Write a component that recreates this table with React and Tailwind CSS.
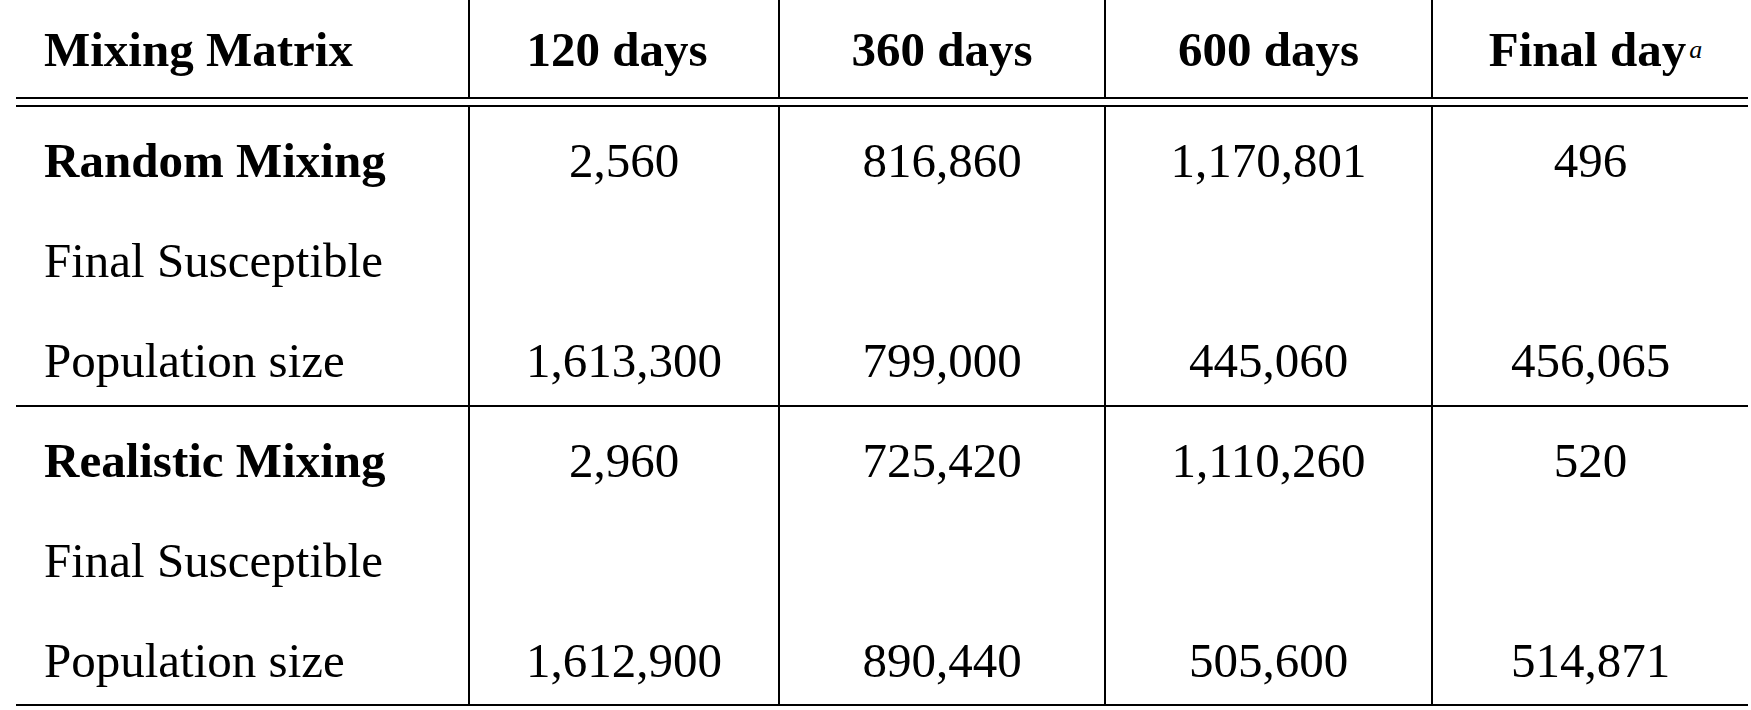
import React from "react";

const cols = "grid grid-cols-[454px_310px_326px_327px_1fr]";

const groups = [
  {
    name: "Random Mixing",
    first: ["2,560", "816,860", "1,170,801", "496"],
    last: ["1,613,300", "799,000", "445,060", "456,065"],
    pb: "pb-[16px]",
  },
  {
    name: "Realistic Mixing",
    first: ["2,960", "725,420", "1,110,260", "520"],
    last: ["1,612,900", "890,440", "505,600", "514,871"],
    pb: "pb-[15px]",
  },
];

function Group({ g }) {
  return (
    <div className={`${cols} border-b-2 border-black`}>
      <div className={`flex flex-col gap-[44px] pt-[26px] ${g.pb} pl-[28px] border-r-2 border-black`}>
        <div className="font-bold">{g.name}</div>
        <div>Final Susceptible</div>
        <div>Population size</div>
      </div>
      {g.first.map((v, i) => (
        <div
          key={i}
          className={`flex flex-col gap-[44px] pt-[26px] ${g.pb} text-center ${i < 3 ? "border-r-2 border-black" : ""}`}
        >
          <div>{v}</div>
          <div>&nbsp;</div>
          <div>{g.last[i]}</div>
        </div>
      ))}
    </div>
  );
}

export default function App() {
  return (
    <div className="bg-white w-full h-[710px] overflow-hidden pl-4 pr-[3px] text-black text-[49px] leading-[56px] font-[family-name:Liberation_Serif,Times_New_Roman,serif]">
      <div className={`${cols} h-[99px] border-b-2 border-black font-bold`}>
        <div className="flex items-center pt-[3px] pl-[28px] border-r-2 border-black">Mixing Matrix</div>
        <div className="flex items-center justify-center pt-[3px] pr-[14px] border-r-2 border-black">120 days</div>
        <div className="flex items-center justify-center pt-[3px] border-r-2 border-black">360 days</div>
        <div className="flex items-center justify-center pt-[3px] border-r-2 border-black">600 days</div>
        <div className="flex items-center justify-center pt-[3px] pl-[10px]">
          <span>
            Final day
            <span className="italic font-normal text-[26px] align-[8px] ml-[3px]">a</span>
          </span>
        </div>
      </div>
      <div className="h-[6px]"></div>
      <div className="border-t-2 border-black">
        {groups.map((g) => (
          <Group key={g.name} g={g} />
        ))}
      </div>
    </div>
  );
}
